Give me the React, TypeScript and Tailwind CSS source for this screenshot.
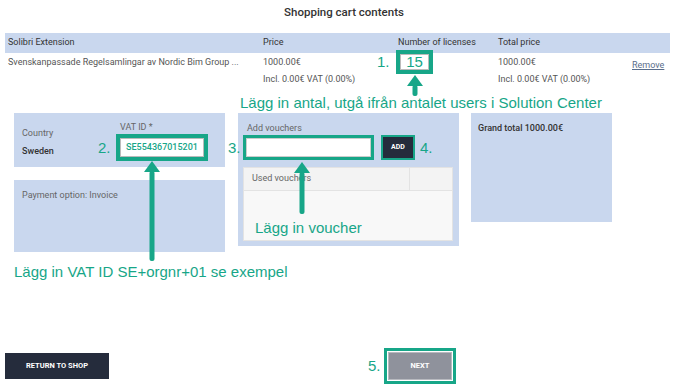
import React from "react";

const ANN = { fontFamily: "'Liberation Sans', Arial, sans-serif" };

function UpArrow({ h }: { h: number }) {
  return (
    <svg width="18" height={h} viewBox={`0 0 18 ${h}`}>
      <polygon points="9,0 17,11 1,11" fill="#17a688" />
      <rect x="6.5" y="10" width="5" height={h - 11} rx="2" fill="#17a688" />
    </svg>
  );
}

export default function App() {
  return (
    <div
      className="relative w-[688px] h-[385px] bg-white overflow-hidden text-[#444]"
      style={{ fontFamily: "Roboto, 'Liberation Sans', sans-serif" }}
    >
      {/* Title */}
      <div className="h-[33px] pt-[4px] text-center text-[11.5px] leading-[16px] font-medium text-[#333]">
        Shopping cart contents
      </div>

      {/* Table */}
      <div className="ml-[5px] w-[665px]">
        <div className="h-[20px] bg-[#c9d7ee] grid grid-cols-[255px_135px_100px_134px_41px] items-center pl-[3px] text-[9px] text-[#333]">
          <div>Solibri Extension</div>
          <div>Price</div>
          <div>Number of licenses</div>
          <div>Total price</div>
          <div></div>
        </div>
        <div className="h-[18px] grid grid-cols-[255px_135px_100px_134px_41px] items-center pl-[3px] text-[9px] text-[#555]">
          <div>Svenskanpassade Regelsamlingar av Nordic Bim Group ...</div>
          <div>1000.00€</div>
          <div></div>
          <div>1000.00€</div>
          <div className="pt-[6px] text-[#5a6e8c] underline">Remove</div>
        </div>
        <div className="h-[18px] grid grid-cols-[255px_135px_100px_134px_41px] items-center pl-[3px] text-[9px] text-[#555]">
          <div></div>
          <div>Incl. 0.00€ VAT (0.00%)</div>
          <div></div>
          <div>Incl. 0.00€ VAT (0.00%)</div>
          <div></div>
        </div>
      </div>

      {/* Annotation 1 */}
      <div className="h-[24px] pl-[240px] pt-[5px] text-[15px] leading-[18px] text-[#17a688]" style={ANN}>
        Lägg in antal, utgå ifrån antalet users i Solution Center
      </div>

      {/* Panels */}
      <div className="flex items-start pl-[14px] gap-[13px]">
        <div className="w-[211px] flex flex-col gap-[13px]">
          <div className="h-[54px] bg-[#c9d7ee] flex">
            <div className="pl-[8px] pt-[14px] w-[84px]">
              <div className="text-[9px] leading-[12px] text-[#666]">Country</div>
              <div className="mt-[6px] text-[9px] leading-[12px] font-medium text-[#333]">Sweden</div>
            </div>
            <div className="pt-[8px]">
              <div className="pl-[22px] text-[9px] leading-[12px] text-[#666]">VAT ID *</div>
              <div className="mt-[1px] flex items-center">
                <span className="w-[18px] text-[15px] leading-[16px] text-[#17a688]" style={ANN}>
                  2.
                </span>
                <div className="w-[92px] h-[27px] border-2 border-[#17a688] p-[2px] bg-[#17a688]">
                  <div className="h-full bg-white border border-[#bbb] flex items-center justify-center text-[9px] font-medium text-[#17a688]">
                    SE554367015201
                  </div>
                </div>
              </div>
            </div>
          </div>
          <div className="h-[72px] bg-[#c9d7ee] pl-[8px] pt-[9px] text-[9px] leading-[12px] text-[#666]">
            Payment option: Invoice
          </div>
        </div>

        <div className="relative w-[221px] h-[133px] bg-[#c9d7ee] px-[5px] pt-[9px]">
          <div className="pl-[4px] text-[9px] leading-[12px] text-[#666]">Add vouchers</div>
          <div className="mt-[1px] flex items-center">
            <div className="w-[131px] h-[25px] border-[3px] border-[#17a688]">
              <div className="h-full bg-white border border-[#ccc]"></div>
            </div>
            <div className="ml-[7px] w-[34px] h-[25px] border-2 border-[#17a688] bg-[#252c3c] flex items-center justify-center text-[7px] font-bold text-white">
              ADD
            </div>
            <span className="ml-[5px] text-[15px] leading-[16px] text-[#17a688]" style={ANN}>
              4.
            </span>
          </div>
          <div className="relative mt-[7px] w-[210px] h-[74px] bg-[#f8f8f8] border border-[#e3e3e3]">
            <div className="h-[23px] flex border-b border-[#e3e3e3] bg-[#f3f3f3]">
              <div className="flex-1 pl-[8px] flex items-center text-[9px] text-[#666]">Used vouchers</div>
              <div className="w-[43px] border-l border-[#e3e3e3]"></div>
            </div>
            <div className="absolute left-[11px] top-[51px] text-[15px] leading-[18px] text-[#17a688]" style={ANN}>
              Lägg in voucher
            </div>
          </div>
          <span className="absolute left-[-10px] top-[27px] text-[15px] leading-[16px] text-[#17a688]" style={ANN}>
            3.
          </span>
        </div>

        <div className="ml-[-1px] w-[141px] h-[109px] bg-[#c9d7ee] pl-[7px] pt-[9px] text-[9px] leading-[12px] font-medium text-[#333]">
          Grand total 1000.00€
        </div>
      </div>

      {/* Annotation 2 */}
      <div className="mt-[11px] pl-[14px] text-[15px] leading-[18px] text-[#17a688]" style={ANN}>
        Lägg in VAT ID SE+orgnr+01 se exempel
      </div>

      {/* Bottom buttons */}
      <div className="mt-[67px] flex items-center pl-[5px]">
        <div className="w-[104px] h-[26px] bg-[#252c3c] flex items-center justify-center text-[7.5px] font-bold text-white">
          RETURN TO SHOP
        </div>
        <span className="ml-[259px] w-[16px] text-[15px] leading-[16px] text-[#17a688]" style={ANN}>
          5.
        </span>
        <div className="w-[72px] h-[36px] border-[3px] border-[#17a688] bg-white p-[1px]">
          <div className="h-full bg-[#8f929c] border border-[#b8bac0] flex items-center justify-center text-[7.5px] font-bold text-white">
            NEXT
          </div>
        </div>
      </div>

      {/* Overlay: licenses box */}
      <span className="absolute left-[377px] top-[54px] text-[15px] leading-[16px] text-[#17a688]" style={ANN}>
        1.
      </span>
      <div className="absolute left-[396px] top-[50px] w-[37px] h-[24px] border-2 border-[#17a688] bg-[#17a688] p-[2px]">
        <div
          className="h-full bg-white border border-[#bbb] flex items-center justify-center text-[15px] text-[#17a688]"
          style={ANN}
        >
          15
        </div>
      </div>

      {/* Arrows */}
      <div className="absolute left-[406px] top-[75px]">
        <UpArrow h={22} />
      </div>
      <div className="absolute left-[143px] top-[161px]">
        <UpArrow h={101} />
      </div>
      <div className="absolute left-[293px] top-[162px]">
        <UpArrow h={53} />
      </div>
    </div>
  );
}
